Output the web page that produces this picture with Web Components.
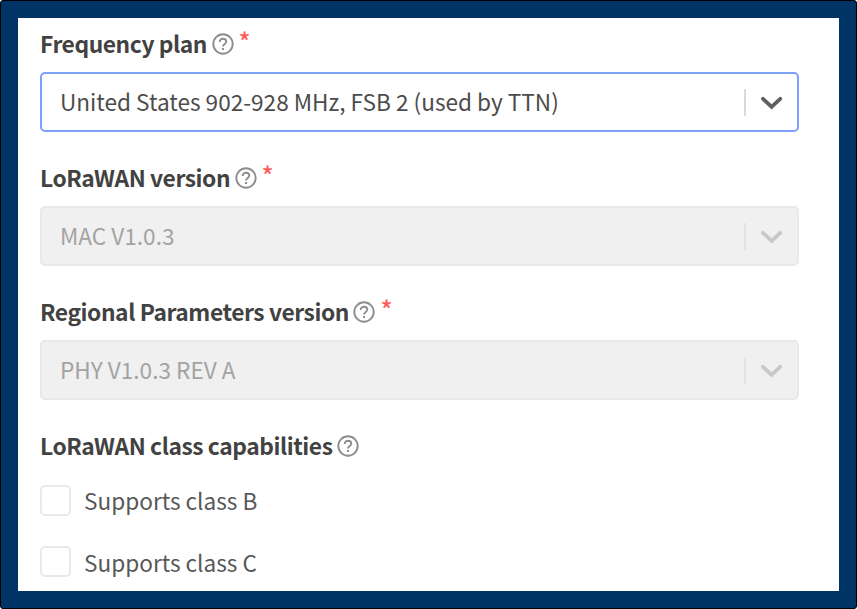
<!DOCTYPE html>
<html lang="en">
<head>
<meta charset="utf-8">
<title>End device settings</title>
<style>
html, body { margin: 0; height: 100%; }
body { overflow: hidden; background: #fff; font-family: "Noto Sans CJK SC", "Noto Sans", sans-serif; color: #3c3c3c; }
</style>
</head>
<body>
<page-frame>
  <form-field label="Frequency plan" required><select-box focused>United States 902-928 MHz, FSB 2 (used by TTN)</select-box></form-field>
  <form-field label="LoRaWAN version" required><select-box disabled>MAC V1.0.3</select-box></form-field>
  <form-field label="Regional Parameters version" required><select-box disabled>PHY V1.0.3 REV A</select-box></form-field>
  <form-field label="LoRaWAN class capabilities">
    <check-option>Supports class B</check-option>
    <check-option>Supports class C</check-option>
  </form-field>
</page-frame>
<script>
const define = (name, html) => customElements.define(name, class extends HTMLElement {
  constructor() {
    super();
    this.attachShadow({ mode: "open" }).innerHTML = html;
  }
  connectedCallback() {
    const label = this.shadowRoot.querySelector(".text");
    if (label && this.hasAttribute("label")) label.textContent = this.getAttribute("label");
  }
});

define("page-frame", `<style>
:host { display: block; box-sizing: border-box; width: 857px; height: 609px; border: 1px solid #000; border-radius: 3px; background: #003366; padding: 17px; }
main { box-sizing: border-box; width: 821px; height: 573px; background: #fff; padding: 9px 40px 0 22px; overflow: hidden; }
</style><main><slot></slot></main>`);

define("help-icon", `<style>
:host { display: block; width: 22px; height: 22px; }
svg { display: block; }
</style><svg width="22" height="22" viewBox="0 0 22 22" fill="none" stroke="#8d8d8d" stroke-width="1.9">
<circle cx="11" cy="11" r="9.7"/>
<path d="M7.7 9C7.7 6.9 9.1 5.7 11 5.7S14.3 6.9 14.3 8.6C14.3 10.8 11 11.2 11 13.6"/>
<path d="M11 14.9V17" stroke-width="2"/></svg>`);

define("form-field", `<style>
:host { display: block; height: 134px; }
.head { display: flex; align-items: center; height: 34px; line-height: 34px; }
.text { font-size: 22.8px; font-weight: 700; letter-spacing: -0.43px; white-space: nowrap; color: #424242; }
help-icon { margin-left: 4.5px; }
.star { display: none; margin: -6px 0 0 5px; font-size: 26px; color: #ff5a5a; -webkit-text-stroke: 0.3px #ff5a5a; }
:host([required]) .star { display: block; }
.body { padding-top: 11px; }
</style><div class="head"><span class="text"></span><help-icon></help-icon><span class="star">*</span></div><div class="body"><slot></slot></div>`);

define("select-box", `<style>
:host { display: flex; align-items: center; box-sizing: border-box; height: 60px; border: 2px solid #e8e8e8; border-radius: 5px; background: #f0f0f0; padding: 0 14px 0 18px; color: #a3a3a3; --arrow: #c8c8c8; --line: #e3e3e3; }
:host([focused]) { border-color: #7da1fb; background: #fff; color: #4c4c4c; --arrow: #606060; --line: #dadada; }
.value { flex: 1; font-size: 22.6px; line-height: 34px; white-space: nowrap; }
.line { width: 2px; height: 27px; background: var(--line); margin-right: 15px; }
svg { display: block; margin-top: 1px; }
</style><span class="value"><slot></slot></span><span class="line"></span>
<svg width="22" height="14" viewBox="0 0 22 14" fill="none" stroke="var(--arrow)" stroke-width="3.8" stroke-linecap="round"><path d="M2 2.8L10.6 10.8L19.2 2.8"/></svg>`);

define("check-option", `<style>
:host { display: flex; align-items: center; height: 31px; margin: 11px 0 30px; }
:host(:last-child) { margin-top: 0; }
.box { box-sizing: border-box; width: 31px; height: 31px; border: 2px solid #e9e9e9; border-radius: 5px; background: #fff; margin-right: 13px; }
.value { font-size: 22.6px; line-height: 34px; white-space: nowrap; color: #585858; }
:host(:last-child) .value { padding-top: 2px; }
</style><span class="box"></span><span class="value"><slot></slot></span>`);
</script>
</body>
</html>
